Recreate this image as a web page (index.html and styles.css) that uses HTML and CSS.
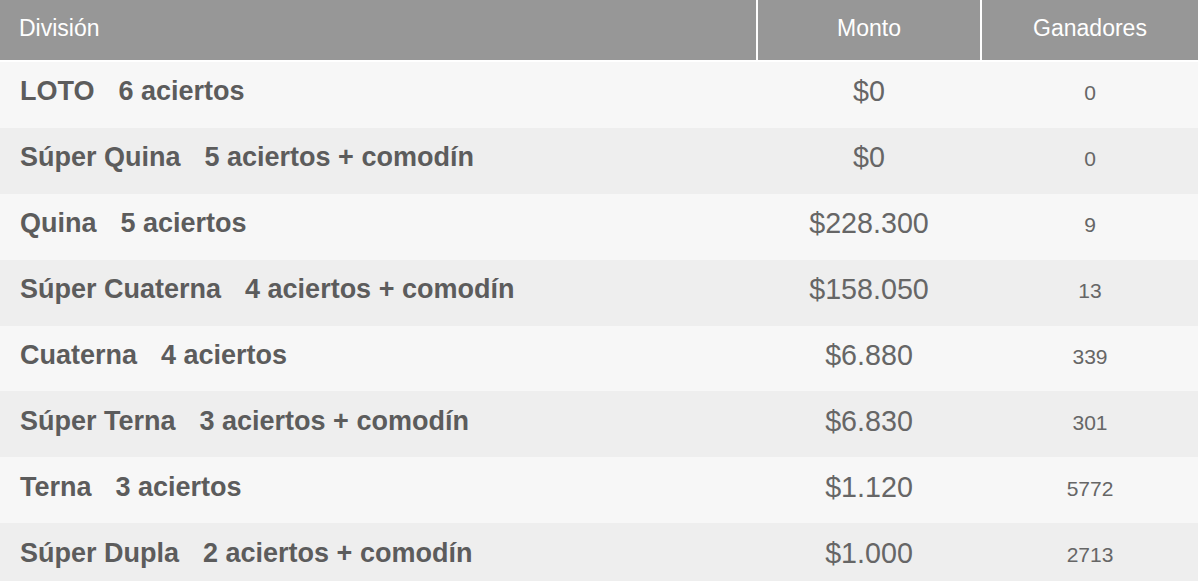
FILE: index.html
```html
<!DOCTYPE html>
<html lang="es">
<head>
<meta charset="utf-8">
<title>Resultados LOTO</title>
<link rel="stylesheet" href="styles.css">
</head>
<body>
<table class="prizes">
  <colgroup>
    <col class="c-div">
    <col class="c-monto">
    <col class="c-gan">
  </colgroup>
  <thead>
    <tr>
      <th class="h-div">División</th>
      <th class="h-num">Monto</th>
      <th class="h-num">Ganadores</th>
    </tr>
  </thead>
  <tbody>
    <tr><td class="div"><span class="name">LOTO</span><span class="hits">6 aciertos</span></td><td class="monto">$0</td><td class="gan">0</td></tr>
    <tr><td class="div"><span class="name">Súper Quina</span><span class="hits">5 aciertos + comodín</span></td><td class="monto">$0</td><td class="gan">0</td></tr>
    <tr><td class="div"><span class="name">Quina</span><span class="hits">5 aciertos</span></td><td class="monto">$228.300</td><td class="gan">9</td></tr>
    <tr><td class="div"><span class="name">Súper Cuaterna</span><span class="hits">4 aciertos + comodín</span></td><td class="monto">$158.050</td><td class="gan">13</td></tr>
    <tr><td class="div"><span class="name">Cuaterna</span><span class="hits">4 aciertos</span></td><td class="monto">$6.880</td><td class="gan">339</td></tr>
    <tr><td class="div"><span class="name">Súper Terna</span><span class="hits">3 aciertos + comodín</span></td><td class="monto">$6.830</td><td class="gan">301</td></tr>
    <tr><td class="div"><span class="name">Terna</span><span class="hits">3 aciertos</span></td><td class="monto">$1.120</td><td class="gan">5772</td></tr>
    <tr><td class="div"><span class="name">Súper Dupla</span><span class="hits">2 aciertos + comodín</span></td><td class="monto">$1.000</td><td class="gan">2713</td></tr>
  </tbody>
</table>
</body>
</html>
```
FILE: styles.css
```css
html, body {
  margin: 0;
  padding: 0;
  background: #ffffff;
}

body {
  font-family: "Liberation Sans", Arial, sans-serif;
  overflow: hidden;
}

.prizes {
  width: 1198px;
  border-collapse: separate;
  border-spacing: 0;
  table-layout: fixed;
}

.c-div { width: 756px; }
.c-monto { width: 224px; }
.c-gan { width: 218px; }

.prizes th {
  height: 62px;
  padding: 0 0 3px 0;
  box-sizing: border-box;
  background: #979797;
  color: #ffffff;
  font-size: 23px;
  font-weight: normal;
  border-bottom: 2px solid #ffffff;
  vertical-align: middle;
}

.prizes th.h-div {
  text-align: left;
  padding-left: 19px;
}

.prizes th.h-num {
  text-align: center;
  border-left: 2px solid #ffffff;
}

.prizes tbody tr {
  height: 65.9px;
}

.prizes tbody tr:nth-child(odd) td {
  background: #f7f7f7;
}

.prizes tbody tr:nth-child(even) td {
  background: #eeeeee;
}

.prizes td {
  padding: 0 0 6px 0;
  vertical-align: middle;
}

.prizes td.div {
  padding-left: 20px;
  font-size: 27px;
  font-weight: bold;
  color: #5c5c5c;
  white-space: nowrap;
}

.hits {
  margin-left: 24px;
}

.prizes td.monto {
  padding-left: 2px;
  text-align: center;
  font-size: 28.7px;
  color: #666666;
}

.prizes td.gan {
  padding-left: 2px;
  padding-bottom: 3px;
  text-align: center;
  font-size: 21px;
  color: #666666;
}
```
